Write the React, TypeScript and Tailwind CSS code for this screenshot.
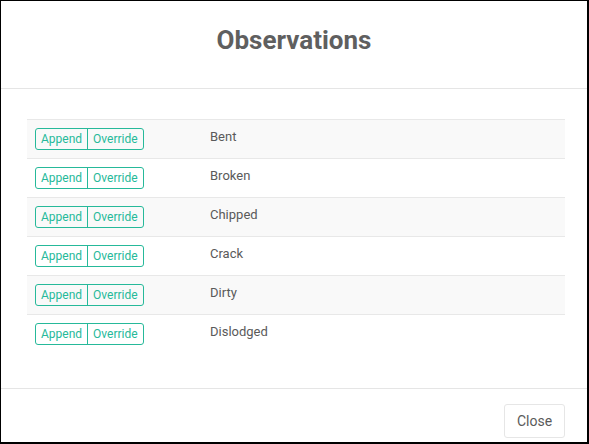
const items = ['Bent', 'Broken', 'Chipped', 'Crack', 'Dirty', 'Dislodged']

function ToggleGroup() {
  return (
    <div className="inline-flex h-[22px] rounded-[3px] border border-[#26b99a] text-[12px] leading-[20px] text-[#26b99a]">
      <span className="px-[5px]">Append</span>
      <span className="border-l border-[#26b99a] px-[5px]">Override</span>
    </div>
  )
}

export default function App() {
  return (
    <div
      className="flex h-[444px] w-[589px] flex-col border-t border-r-2 border-b-2 border-l border-black bg-white"
      style={{ fontFamily: 'Roboto, "Liberation Sans", sans-serif' }}
    >
      {/* header */}
      <div className="flex h-[88px] shrink-0 items-start justify-center border-b border-[#e5e5e5] pt-[21px]">
        <h1 className="text-[26px] leading-[36px] font-bold text-[#5f5f5f]">Observations</h1>
      </div>

      {/* body */}
      <div className="flex-1 pt-[30px] pr-[22px] pl-[26px]">
        {items.map((name, i) => (
          <div
            key={name}
            className={
              'flex h-[39px] border-t border-[#e8e8e8] ' + (i % 2 === 0 ? 'bg-[#f9f9f9]' : 'bg-white')
            }
          >
            <div className="w-[175px] shrink-0 pt-[6px] pl-[8px]">
              <ToggleGroup />
            </div>
            <div className="pt-[7px] pl-[8px] text-[13px] leading-[19px] text-[#5a5a5a]">{name}</div>
          </div>
        ))}
      </div>

      {/* footer */}
      <div className="flex h-[54px] shrink-0 items-start justify-end border-t border-[#e5e5e5] pt-[15px] pr-[22px]">
        <button className="h-[34px] w-[61px] rounded-[3px] border border-[#e6e6e6] bg-white text-[14px] text-[#5a5a5a]">
          Close
        </button>
      </div>
    </div>
  )
}
